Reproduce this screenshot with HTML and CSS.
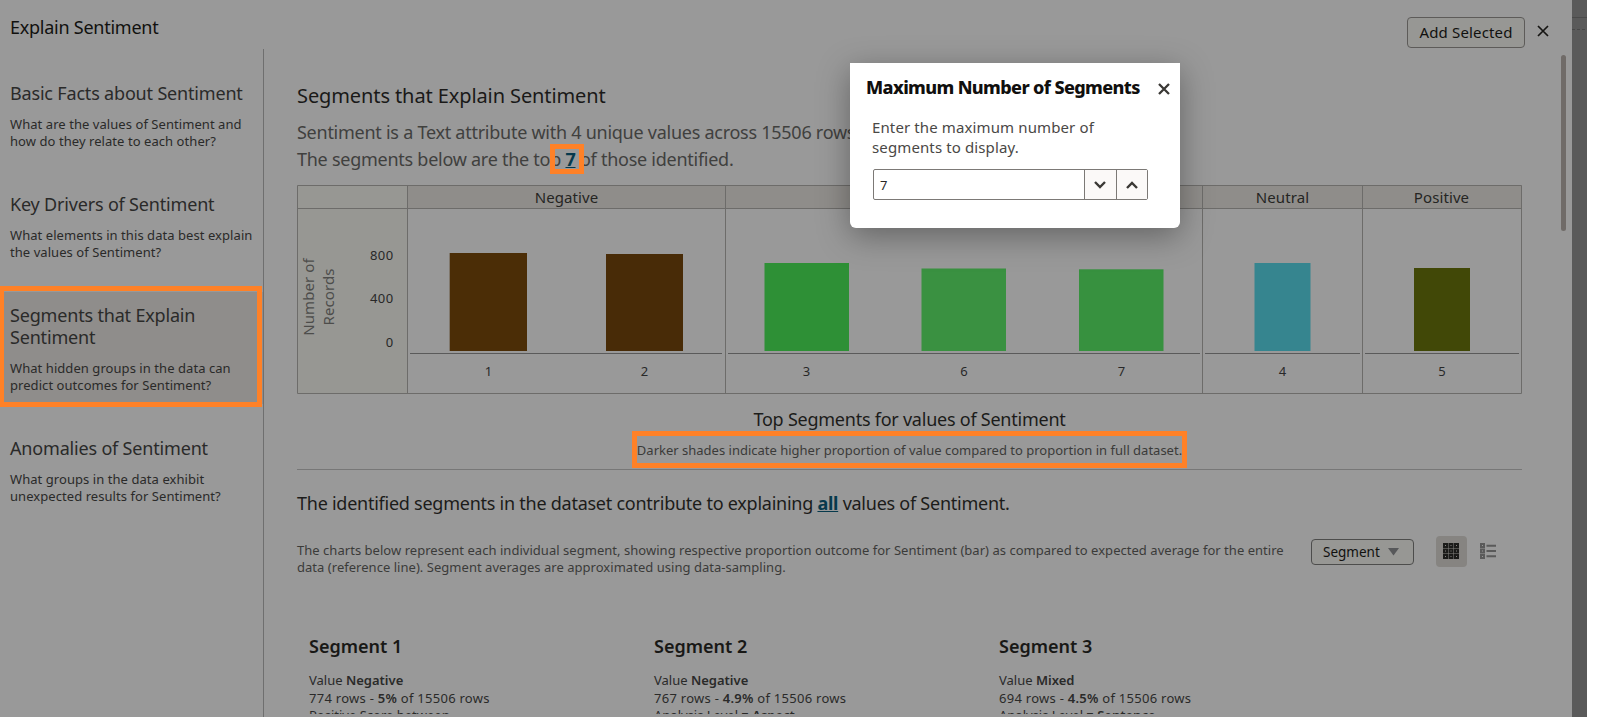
FILE: index.html
```html
<!DOCTYPE html>
<html lang="en">
<head>
<meta charset="utf-8">
<title>Explain Sentiment</title>
<link rel="stylesheet" href="styles.css">
</head>
<body>
<div class="stage">
  <div class="panel">
    <header class="topbar">
      <h1 class="title">Explain Sentiment</h1>
      <div class="topbar-actions">
        <button class="add-btn">Add Selected</button>
        <svg class="close" width="12" height="12" viewBox="0 0 12 12"><path d="M1 1 11 11M11 1 1 11" stroke="#161513" stroke-width="1.700" fill="none"/></svg>
      </div>
    </header>
    <div class="body">
      <nav class="sidebar">
        <div class="nav-item"><h2>Basic Facts about Sentiment</h2><p>What are the values of Sentiment and<br>how do they relate to each other?</p></div>
        <div class="nav-item"><h2>Key Drivers of Sentiment</h2><p>What elements in this data best explain<br>the values of Sentiment?</p></div>
        <div class="nav-item selected"><h2>Segments that Explain<br>Sentiment</h2><p>What hidden groups in the data can<br>predict outcomes for Sentiment?</p><i class="mark mark-nav"></i></div>
        <div class="nav-item"><h2>Anomalies of Sentiment</h2><p>What groups in the data exhibit<br>unexpected results for Sentiment?</p></div>
      </nav>
      <main class="main">
        <h2 class="main-title">Segments that Explain Sentiment</h2>
        <p class="lead">Sentiment is a Text attribute with 4 unique values across 15506 rows.<br>The segments below are the top <b class="link seven">7<i class="mark mark-seven"></i></b> of those identified.</p>
        <svg class="chart" width="1225" height="209" viewBox="0 0 1225 209">
          <rect x="0" y="0" width="110" height="208" fill="#979793"/>
          <rect x="110" y="0" width="1115" height="24" fill="#8f8d8a"/>
          <path class="grid" d="M.5 .5H1224.5V208.5H.5ZM.5 23.5H1224.5M110.5 .5V208.5M428.5 .5V208.5M905.5 .5V208.5M1065.5 .5V208.5"/>
          <path class="axis" d="M113 168.5H425M431 168.5H903M908 168.5H1063M1068 168.5H1222"/>
          <g class="head"><text x="269.500" y="18">Negative</text><text x="667" y="18">Mixed</text><text x="985.500" y="18">Neutral</text><text x="1144.500" y="18">Positive</text></g>
          <rect x="152.700" y="68" width="77.300" height="98" fill="#4b2d06"/>
          <rect x="309" y="69" width="77" height="97" fill="#482b07"/>
          <rect x="467.500" y="78" width="84.500" height="88" fill="#2e9036"/>
          <rect x="624.500" y="83.500" width="84.500" height="82.500" fill="#3a9141"/>
          <rect x="782" y="84.300" width="84.500" height="81.700" fill="#37913f"/>
          <rect x="957.500" y="78" width="56" height="88" fill="#36858f"/>
          <rect x="1117" y="83" width="56" height="83" fill="#414807"/>
          <g class="tick"><text x="191.500" y="191">1</text><text x="347.500" y="191">2</text><text x="509.500" y="191">3</text><text x="667" y="191">6</text><text x="824.500" y="191">7</text><text x="985.500" y="191">4</text><text x="1145" y="191">5</text></g>
          <g class="tick end"><text x="96.500" y="75">800</text><text x="96.500" y="118">400</text><text x="96.500" y="162">0</text></g>
          <g class="ytitle"><text transform="translate(17 112) rotate(-90)">Number of</text><text transform="translate(37 112) rotate(-90)">Records</text></g>
        </svg>
        <div class="chart-title">Top Segments for values of Sentiment</div>
        <div class="chart-note"><span>Darker shades indicate higher proportion of value compared to proportion in full dataset.</span></div>
        <p class="statement">The identified segments in the dataset contribute to explaining <b class="link">all</b> values of Sentiment.</p>
        <div class="controls">
          <p class="explain">The charts below represent each individual segment, showing respective proportion outcome for Sentiment (bar) as compared to expected average for the entire<br>data (reference line). Segment averages are approximated using data-sampling.</p>
          <div class="tools">
            <button class="select">Segment<svg width="11" height="8" viewBox="0 0 11 8"><path d="M0 0H11L5.500 7.500Z" fill="#57585a"/></svg></button>
            <span class="toggle on"><svg width="16" height="16" viewBox="0 0 16 16"><path d="M1 1h3v3h-3zM6.500 1h3v3h-3zM12 1h3v3h-3zM1 6.500h3v3h-3zM6.500 6.500h3v3h-3zM12 6.500h3v3h-3zM1 12h3v3h-3zM6.500 12h3v3h-3zM12 12h3v3h-3z" fill="none" stroke="#1b1b19" stroke-width="2"/></svg></span>
            <span class="toggle"><svg width="16" height="16" viewBox="0 0 16 16"><path d="M1 1h3v3h-3zM1 6.500h3v3h-3zM1 12h3v3h-3zM6.500 2.700H16M6.500 8H16M6.500 13.300H16" fill="none" stroke="#5a5a5a" stroke-width="2"/></svg></span>
          </div>
        </div>
        <div class="cards">
          <section class="card"><h3>Segment 1</h3><p>Value <b>Negative</b></p><p class="count">774 rows - <b>5%</b> of 15506 rows</p><p class="rule">Positive Score between</p></section>
          <section class="card"><h3>Segment 2</h3><p>Value <b>Negative</b></p><p class="count">767 rows - <b>4.9%</b> of 15506 rows</p><p class="rule">Analysis Level = <b>Aspect</b></p></section>
          <section class="card"><h3>Segment 3</h3><p>Value <b>Mixed</b></p><p class="count">694 rows - <b>4.5%</b> of 15506 rows</p><p class="rule">Analysis Level = <b>Sentence</b></p></section>
        </div>
      </main>
    </div>
    <i class="scroll"></i>
  </div>
  <div class="strip"></div>
  <div class="dialog">
    <div class="dialog-head"><h2>Maximum Number of Segments</h2><svg width="12" height="12" viewBox="0 0 12 12"><path d="M1 1 11 11M11 1 1 11" stroke="#3a3835" stroke-width="2.300" fill="none"/></svg></div>
    <p>Enter the maximum number of<br>segments to display.</p>
    <div class="spinner">
      <span class="value">7</span>
      <span class="step"><svg width="12" height="8" viewBox="0 0 12 8"><path d="M1 1 6 6 11 1" fill="none" stroke="#3a3835" stroke-width="2.400"/></svg></span>
      <span class="step last"><svg width="12" height="8" viewBox="0 0 12 8"><path d="M1 7 6 2 11 7" fill="none" stroke="#3a3835" stroke-width="2.400"/></svg></span>
    </div>
  </div>
</div>
</body>
</html>
```

FILE: styles.css
```css
* { box-sizing: border-box; margin: 0; padding: 0; }
body { background: #fff; font-family: "Noto Sans", "Open Sans", sans-serif; color: #2a2a29; overflow: hidden; }
h1, h2, h3 { font-weight: 400; }
.stage { position: relative; display: flex; width: 1587px; height: 717px; overflow: hidden; }
.panel { position: relative; width: 1572px; height: 717px; background: #999; display: flex; flex-direction: column; overflow: hidden; }
.strip { width: 15px; background: linear-gradient(#4a4a4a, #4a4a4a) 0 17px / 15px 1px no-repeat, repeating-linear-gradient(90deg, #484848 0 3px, #5b5b5b 3px 5px) 0 29px / 15px 1px no-repeat, #5a5a5a; }
.topbar { height: 49px; flex: none; display: flex; justify-content: space-between; padding: 14px 23px 0 10px; }
.title { font-size: 18px; line-height: 26px; color: #11110f; letter-spacing: -0.25px; }
.topbar-actions { display: flex; gap: 12px; padding-top: 3px; }
.add-btn { width: 118px; height: 31px; border: 1px solid #5d5b59; border-radius: 4px; background: #979794; font: 15px "Noto Sans", sans-serif; color: #11110f; letter-spacing: 0.15px; white-space: nowrap; padding-bottom: 2px; }
.close { margin-top: 8px; }
.body { flex: 1; display: flex; min-height: 0; }
.sidebar { width: 264px; flex: none; border-right: 1px solid #6f6f6f; padding-top: 21px; }
.nav-item { position: relative; padding: 12px 0 10px 10px; margin-bottom: 21px; white-space: nowrap; }
.nav-item h2 { font-size: 18px; line-height: 22px; letter-spacing: -0.18px; }
.nav-item p { font-size: 13px; line-height: 17px; margin-top: 12px; letter-spacing: 0.06px; }
.selected { background: #8f8d8b; }
.mark { position: absolute; border: 5px solid #ff8127; }
.mark-nav { left: 0; top: -6px; width: 262px; height: 121px; border-left-width: 4px; }
.main { flex: 1; padding: 34px 50px 0 33px; min-width: 0; height: 665px; overflow: hidden; }
.main-title { font-size: 20px; line-height: 26px; color: #1a1918; font-weight: 450; letter-spacing: -0.1px; }
.lead { margin-top: 10px; font-size: 18px; line-height: 27px; color: #40403e; letter-spacing: -0.26px; white-space: nowrap; }
.link { color: #06394c; text-decoration: underline; }
.seven { position: relative; }
.mark-seven { left: -15px; top: -3px; width: 34px; height: 30px; }
.chart { display: block; margin-top: 12px; }
.grid { fill: none; stroke: #6d6c6a; }
.axis { stroke: #5a5a5a; }
.head text { font-size: 15px; text-anchor: middle; fill: #252523; letter-spacing: 0.1px; }
.tick text { font-size: 13px; text-anchor: middle; fill: #282828; }
.tick.end text { text-anchor: end; letter-spacing: 0.4px; }
.ytitle text { font-size: 15px; text-anchor: middle; fill: #4d4d4b; letter-spacing: 0.1px; }
.chart-title { text-align: center; font-size: 18px; line-height: 24px; margin-top: 13px; letter-spacing: -0.24px; color: #1c1c1a; }
.chart-note { height: 39px; border-bottom: 1px solid #777; display: flex; justify-content: center; }
.chart-note span { width: 555px; height: 37px; border: 5px solid #ff8127; font-size: 13px; line-height: 28px; color: #3b3b39; white-space: nowrap; display: flex; justify-content: center; }
.statement { margin-top: 20px; font-size: 18px; line-height: 27px; letter-spacing: -0.25px; color: #1c1c1a; white-space: nowrap; }
.controls { display: flex; margin-top: 23px; height: 60px; }
.explain { width: 1014px; flex: none; font-size: 13px; line-height: 17px; color: #3b3b39; padding-top: 2px; white-space: nowrap; letter-spacing: 0.032px; }
.tools { display: flex; margin-top: -1px; }
.select { width: 103px; height: 26px; border: 1px solid #4d4d4c; border-radius: 4px; background: #979794; font: 13.500px "Noto Sans", sans-serif; color: #11110f; display: flex; align-items: center; gap: 8px; padding-left: 11px; }
.toggle { width: 31px; height: 31px; display: grid; place-items: center; border-radius: 4px; margin: -3px 0 0 6px; padding: 0 1px 1px 0; }
.toggle.on { background: #868481; margin-left: 22px; }
.cards { display: grid; grid-template-columns: repeat(3, 345px); padding-left: 12px; margin-top: 33px; }
.card h3 { font-size: 18px; line-height: 26px; font-weight: 600; color: #181816; margin-bottom: 12px; }
.card p { font-size: 13px; line-height: 18px; white-space: nowrap; }
.card .count { letter-spacing: 0.27px; }
.card .rule { line-height: 16px; }
.card b { font-weight: 600; }
.scroll { position: absolute; left: 1561px; top: 55px; width: 5px; height: 176px; border-radius: 3px; background: #706b68; }
.dialog { position: absolute; left: 850px; top: 63px; width: 330px; height: 165px; background: #fff; border-radius: 0 0 6px 6px; box-shadow: 0 8px 32px rgba(0,0,0,.35); padding: 11px 0 0 16px; }
.dialog-head { display: flex; justify-content: space-between; align-items: center; padding-right: 10px; white-space: nowrap; }
.dialog-head svg { margin-top: 3px; }
.dialog-head h2 { font-size: 18px; line-height: 26px; font-weight: 800; color: #100f0e; letter-spacing: -0.62px; }
.dialog p { margin: 17px 0 0 6px; font-size: 15px; line-height: 20px; color: #4a4846; letter-spacing: 0.12px; }
.spinner { display: flex; width: 275px; height: 31px; margin: 12px 0 0 7px; border: 1px solid #7c7976; border-radius: 2px; }
.value { flex: 1; padding-left: 6px; font-size: 13px; line-height: 30px; color: #2a2826; }
.step { width: 32px; border-left: 1px solid #7c7976; background: #fbf9f8; display: grid; place-items: center; padding-right: 1px; }
.step.last { width: 31px; }
```
